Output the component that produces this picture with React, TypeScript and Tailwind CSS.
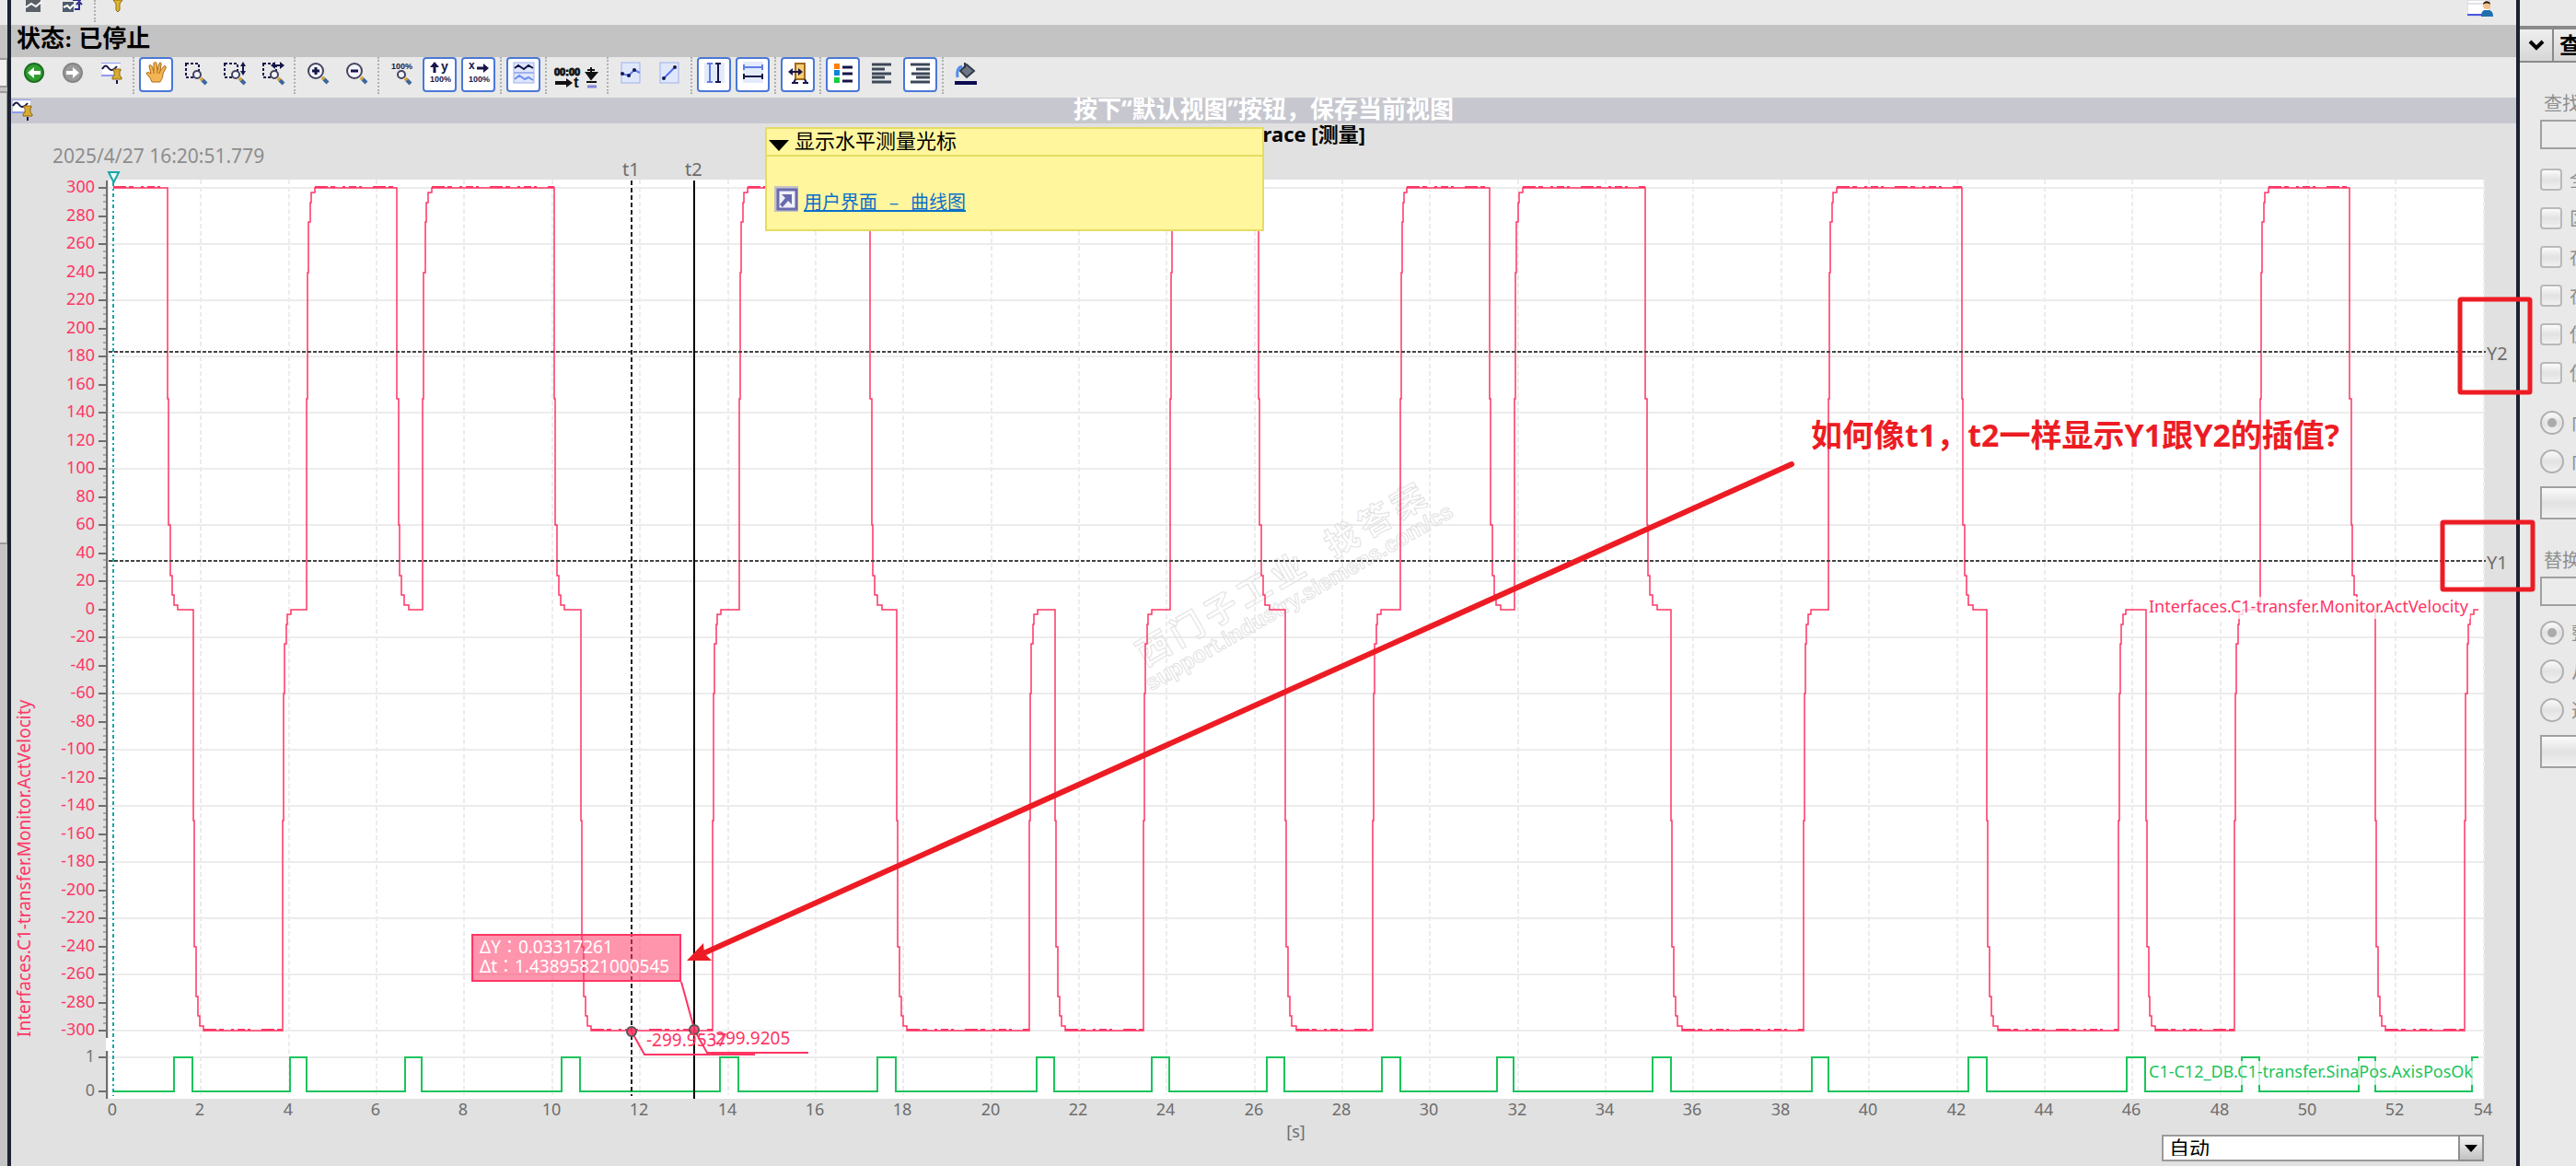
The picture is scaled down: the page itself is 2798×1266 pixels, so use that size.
import React from "react";

const UI = "font-['Noto_Sans','Noto_Sans_CJK_SC',sans-serif]";
const PINK = "#ff3564";
const GREEN = "#1cc45c";
const RED = "#ed1c24";

/* ---------- chart data ---------- */

const PLOT = { left: 118, right: 2698, top: 195, bottom: 1193 };
const yOf = (v: number) => Math.round(661.5 - v * 1.525);
const xOf = (s: number) => Math.round(123 + s * 47.68);

// [start of the change, settled, new level]
const velocity: [number, number, number][] = [
  [182, 193, 0], [210, 221, -300], [307, 316, 0], [333, 342, 300],
  [431, 444, 0], [459, 469, 300], [602, 613, 0], [631, 642, -300],
  [774, 783, 0], [803, 812, 300], [945, 958, 0], [974, 985, -300],
  [1118, 1127, 0], [1146, 1157, -300], [1242, 1251, 0], [1271, 1278, 300],
  [1367, 1379, 0], [1396, 1408, -300], [1491, 1500, 0], [1521, 1528, 300],
  [1618, 1630, 0], [1645, 1654, 300], [1787, 1800, 0], [1815, 1827, -300],
  [1959, 1967, 0], [1986, 1995, 300], [2131, 2143, 0], [2158, 2170, -300],
  [2301, 2309, 0], [2331, 2341, -300], [2427, 2436, 0], [2455, 2464, 300],
  [2552, 2565, 0], [2580, 2591, -300], [2677, 2687, 0],
];

const pulses: [number, number][] = [
  [189, 209], [315, 333], [440, 458], [610, 630], [782, 802], [953, 973],
  [1126, 1145], [1251, 1270], [1376, 1395], [1501, 1521], [1626, 1644],
  [1795, 1815], [1968, 1986], [2138, 2158], [2310, 2330], [2435, 2454],
  [2562, 2580], [2685, 2692],
];

function velocityPath() {
  let level = 300;
  let d = `M123 ${yOf(300)}`;
  for (const [a, b, next] of velocity) {
    const y0 = yOf(level);
    const dy = yOf(next) - y0;
    const w = b - a;
    const steps: [number, number][] = [[0, 0.5], [0.12, 0.8], [0.26, 0.92], [0.42, 0.965], [0.6, 0.99], [1, 1]];
    d += ` H${a}`;
    for (const [fx, fy] of steps) {
      d += ` H${Math.round(a + fx * w)} V${Math.round(y0 + dy * fy)}`;
    }
    level = next;
  }
  return d + " H2692";
}

function ripples() {
  const out: { x1: number; x2: number; y: number }[] = [];
  let level = 300;
  let from = 123;
  for (const [a, b, next] of velocity) {
    if (level !== 0) out.push({ x1: from, x2: a, y: yOf(level) - 1 });
    level = next;
    from = b;
  }
  return out;
}

function pulsePath() {
  let d = "M123 1185";
  pulses.forEach(([a, b], i) => {
    d += ` H${a} V1148 H${b}`;
    if (i < pulses.length - 1) d += " V1185";
  });
  return d;
}

const yTicks = Array.from({ length: 31 }, (_, i) => 300 - i * 20);
const yMinor = Array.from({ length: 121 }, (_, i) => 300 - i * 5);
const xTicks = Array.from({ length: 28 }, (_, i) => i * 2);

function Chart() {
  return (
    <svg
      viewBox="12 134 2721 1082"
      className={`block w-full h-auto ${UI}`}
      role="img"
      aria-label="Trace"
    >
      <rect x={PLOT.left} y={PLOT.top} width={PLOT.right - PLOT.left} height={PLOT.bottom - PLOT.top} fill="#fff" />
      <text x="1360" y="154" fontSize="22" fontWeight="700" fill="#000">Trace [测量]</text>
      <text x="57" y="177" fontSize="21" fill="#8d8d8d">2025/4/27 16:20:51.779</text>

      <g stroke="#ececec" strokeWidth="2">
        {yTicks.filter((_, i) => i % 2 === 0).map((v) => (
          <line key={v} x1={PLOT.left} x2={PLOT.right} y1={yOf(v)} y2={yOf(v)} />
        ))}
        <line x1={PLOT.left} x2={PLOT.right} y1="1148" y2="1148" />
        {xTicks.slice(1).map((s) => (
          <line key={s} x1={xOf(s)} x2={xOf(s)} y1={PLOT.top} y2={PLOT.bottom - 4} strokeDasharray="5 3" />
        ))}
      </g>

      <g stroke="#6e6e6e" strokeWidth="2">
        <line x1="116" x2="116" y1="196" y2="1127" />
        <line x1="116" x2="116" y1="1141" y2="1193" />
        <rect x="115" y="1127" width="3" height="14" fill="#fff" stroke="none" />
        {yTicks.map((v) => (
          <line key={v} x1="107" x2="116" y1={yOf(v)} y2={yOf(v)} />
        ))}
        {yMinor.map((v) => (
          <line key={v} x1="112" x2="116" y1={yOf(v)} y2={yOf(v)} strokeWidth="1" />
        ))}
        <line x1="107" x2="116" y1="1148" y2="1148" />
        <line x1="107" x2="116" y1="1185" y2="1185" />
      </g>
      <g fontSize="18" textAnchor="end" fill={PINK}>
        {yTicks.map((v) => (
          <text key={v} x="103" y={yOf(v) + 5}>{v}</text>
        ))}
        <g fill="#757575">
          <text x="103" y="1153">1</text>
          <text x="103" y="1190">0</text>
        </g>
      </g>
      <g fontSize="18" textAnchor="middle" fill="#6d6d6d">
        {xTicks.map((s) => (
          <text key={s} x={xOf(s) - 1} y="1211">{s}</text>
        ))}
      </g>
      <text transform="translate(33 1126) rotate(-90)" fontSize="19" fill={PINK}>
        Interfaces.C1-transfer.Monitor.ActVelocity
      </text>

      {/* watermark */}
      <g transform="translate(1244 724) rotate(-30)" fill="none" stroke="#e2e2e2" strokeWidth="1" fontWeight="700">
        <text x="0 42 84 126 168 236 278 319" y="0" fontSize="36">西门子工业找答案</text>
        <text x="-8" y="26" fontSize="24" className="font-['Liberation_Sans',sans-serif]">support.industry.siemens.com/cs</text>
      </g>

      <line x1="123" x2="123" y1="198" y2="1190" stroke="#1aa5a5" strokeWidth="2" strokeDasharray="4 3 2 3" />
      <path d="M118 187 H129 L123.500 198 Z" fill="#e8ffff" stroke="#1aa5a5" strokeWidth="2" />

      <path d={pulsePath()} fill="none" stroke={GREEN} strokeWidth="2" />
      <path d={velocityPath()} fill="none" stroke={PINK} strokeWidth="1.5" />
      <g stroke={PINK} strokeWidth="2">
        {ripples().map((r) => (
          <line key={r.x1} x1={r.x1} x2={r.x2} y1={r.y} y2={r.y} strokeDasharray="14 3 5 8 3 4 8 3 3 12" />
        ))}
      </g>

      {/* measuring cursors */}
      <g stroke="#222" strokeWidth="2">
        <line x1="118" x2="2700" y1="382" y2="382" strokeDasharray="4 2" stroke="#444" />
        <line x1="118" x2="2700" y1="609" y2="609" strokeDasharray="4 2" stroke="#444" />
        <line x1="686" x2="686" y1="196" y2="1190" strokeDasharray="5 3" />
        <line x1="754" x2="754" y1="196" y2="1193" stroke="#000" />
      </g>
      <g fontSize="20" fill="#6d6d6d">
        <text x="676" y="191">t1</text>
        <text x="744" y="191">t2</text>
        <text x="2701" y="391">Y2</text>
        <text x="2701" y="618">Y1</text>
      </g>

      {/* signal names */}
      <rect x="2334" y="648" width="349" height="24" fill="#fff" opacity="0.75" />
      <text x="2334" y="665" fontSize="18" fill={PINK}>Interfaces.C1-transfer.Monitor.ActVelocity</text>
      <rect x="2334" y="1152" width="352" height="26" fill="#fff" opacity="0.75" />
      <text x="2334" y="1170" fontSize="18" fill={GREEN}>C1-C12_DB.C1-transfer.SinaPos.AxisPosOk</text>

      {/* cursor values */}
      <g fill="none" stroke={PINK} strokeWidth="2">
        <path d="M740 1066 L754 1117" />
        <path d="M686 1120 L700 1145 H820" />
        <path d="M754 1118 L768 1143 H878" />
      </g>
      <g fill={PINK} fillOpacity="0.85" stroke="#555" strokeWidth="2">
        <circle cx="686" cy="1120" r="5" />
        <circle cx="754" cy="1118" r="5" />
      </g>
      <g fontSize="19" fill={PINK}>
        <text x="702" y="1136">-299.9537</text>
        <text x="771" y="1134">-299.9205</text>
      </g>
      <rect x="513" y="1015" width="226" height="50" fill="#ff3564" fillOpacity="0.53" stroke={PINK} strokeWidth="2" />
      <g fontSize="19" fill="#fff" className="font-['Noto_Sans','Noto_Sans_CJK_TC',sans-serif]">
        <text x="521" y="1035">ΔY：0.03317261</text>
        <text x="521" y="1056">Δt：1.43895821000545</text>
      </g>
    </svg>
  );
}

/* ---------- toolbar icons ---------- */

const NAVY = "#16164a";

function Icon({ children, w = 24 }: { children: React.ReactNode; w?: number }) {
  return (
    <svg width={w} height="26" viewBox={`0 0 ${w} 26`} fill="none" aria-hidden="true" className="shrink-0 overflow-visible">
      {children}
    </svg>
  );
}

function Lens({ x = 12, y = 12, r = 4 }: { x?: number; y?: number; r?: number }) {
  const k = Math.round(r * 0.7);
  return (
    <>
      <path d={`M${x + k + 1} ${y + k + 1} L${x + k + 3} ${y + k + 3}`} stroke="#d9a42c" strokeWidth="4" />
      <path d={`M${x + k + 3} ${y + k + 3} L${x + k + 7} ${y + k + 7}`} stroke="#3c679c" strokeWidth="4" />
      <circle cx={x} cy={y} r={r} fill="#f3f4fa" stroke="#44445f" strokeWidth="2" />
    </>
  );
}

const Arrow = ({ color, edge, flip }: { color: string; edge: string; flip?: boolean }) => (
  <Icon>
    <circle cx="12" cy="13" r="10" fill={color} stroke={edge} strokeWidth="2" />
    <path d={flip ? "M19 13 L12 7 V11 H5 V15 H12 V19 Z" : "M5 13 L12 7 V11 H19 V15 H12 V19 Z"} fill="#fff" />
  </Icon>
);

const PinIcon = () => (
  <Icon>
    <rect x="2" y="3" width="19" height="14" fill="#fff" />
    <path d="M1 2 H22 V3 H1Z M1 15 H15 V17 H1Z" fill="#8f9af0" />
    <path d="M2 9 C5 4 7 5 9 8 S14 11 18 6" stroke={NAVY} strokeWidth="2" />
    <path d="M14 9 H22 V11 H21 V16 L23 18 V20 H13 V18 L15 16 V11 H14 Z" fill="#d8ab35" stroke="#8f6b12" />
    <path d="M18 21 V25" stroke={NAVY} strokeWidth="2" />
  </Icon>
);

const HandIcon = () => (
  <Icon>
    <path
      d="M7 23 C6 20 4 17 1 14 C1 12 3 12 6 14 L4 6 C4 4 6 4 7 6 L9 11 L9 3 C9 1 12 1 12 3 L13 10 L15 3 C15 1 18 2 17 4 L16 11 L20 6 C21 5 23 6 22 8 L19 14 C19 19 17 21 16 23 Z"
      fill="#f3b553" stroke="#a86818" strokeWidth="1"
    />
    <path d="M9 11 V14 M13 10 V14 M16 11 L15 14" stroke="#a86818" />
  </Icon>
);

const ZoomArea = ({ dir }: { dir?: "v" | "h" }) => (
  <Icon w={24}>
    <path d="M2 3 H16 V18 H2 Z" stroke={NAVY} strokeWidth="2" strokeDasharray="3 2" />
    <Lens x={14} y={15} r={4} />
    {dir === "v" && (
      <>
        <path d="M22 5 V12" stroke={NAVY} strokeWidth="2" />
        <path d="M19 6 L22 1 L25 6 Z M19 11 L22 16 L25 11 Z" fill={NAVY} />
      </>
    )}
    {dir === "h" && (
      <>
        <path d="M14 5 H21" stroke={NAVY} strokeWidth="2" />
        <path d="M15 1 L10 5 L15 9 Z M20 1 L25 5 L20 9 Z" fill={NAVY} />
      </>
    )}
  </Icon>
);

const ZoomSign = ({ plus }: { plus?: boolean }) => (
  <Icon>
    <Lens x={10} y={11} r={8} />
    <path d={plus ? "M6 11 H14 M10 7 V15" : "M6 11 H14"} stroke={NAVY} strokeWidth="3" />
  </Icon>
);

const tiny = "font-['Liberation_Sans',sans-serif] font-bold";

const Zoom100 = () => (
  <Icon w={26}>
    <text x="2" y="9" fontSize="9" fill={NAVY} className={tiny}>100%</text>
    <Lens x={13} y={15} r={4} />
  </Icon>
);
const Fit = ({ axis }: { axis: "x" | "y" }) => (
  <Icon w={26}>
    {axis === "y" ? (
      <>
        <path d="M7 5 V13" stroke={NAVY} strokeWidth="3" />
        <path d="M2 7 L7 1 L12 7 Z" fill={NAVY} />
        <text x="14" y="11" fontSize="14" fill={NAVY} className={tiny}>y</text>
      </>
    ) : (
      <>
        <text x="2" y="9" fontSize="12" fill={NAVY} className={tiny}>x</text>
        <path d="M11 8 H19" stroke={NAVY} strokeWidth="3" />
        <path d="M18 3 L24 8 L18 13 Z" fill={NAVY} />
      </>
    )}
    <text x="2" y="23" fontSize="9" fill={NAVY} className={tiny}>100%</text>
  </Icon>
);

const WavesIcon = () => (
  <Icon>
    <rect x="1" y="2" width="22" height="22" fill="#dfe7fb" stroke="#9fb1ee" />
    <path d="M1 13 H23" stroke="#9fb1ee" strokeWidth="2" />
    <path d="M2 8 L6 5 L12 9 L17 5 L22 8" stroke={NAVY} strokeWidth="2" />
    <path d="M2 20 L7 16 L13 20 L17 18 L22 21" stroke="#6f8df0" strokeWidth="2" />
  </Icon>
);

const TimeIcon = () => (
  <Icon w={50}>
    <text x="0" y="12" fontSize="11" fill="#111" stroke="#111" className={tiny}>00:00</text>
    <path d="M1 20 H14" stroke="#111" strokeWidth="4" />
    <path d="M13 15 L20 20 L13 25 Z" fill="#111" />
    <text x="21" y="25" fontSize="17" fill="#111" className={tiny}>t</text>
    <path d="M40 3 V16 M36 6 H44 M35 9 H46 L40 16 Z M35 19 H46" stroke="#111" strokeWidth="2" fill="#111" />
    <path d="M36 24 H46" stroke="#7f86d8" strokeWidth="3" />
  </Icon>
);

const SamplesIcon = () => (
  <Icon>
    <rect x="2" y="2" width="20" height="22" fill="#dfe7fb" stroke="#9fb1ee" />
    <path d="M2 14 L10 16 L16 10 L22 13" stroke="#5f7df0" strokeWidth="2" />
    <g fill={NAVY}><circle cx="3" cy="14" r="2" /><circle cx="10" cy="16" r="2" /><circle cx="16" cy="10" r="2" /></g>
  </Icon>
);
const LineIcon = () => (
  <Icon>
    <rect x="2" y="2" width="20" height="22" fill="#dfe7fb" stroke="#9fb1ee" />
    <path d="M6 19 L18 7" stroke="#4f6df0" strokeWidth="2" />
    <g fill={NAVY}><circle cx="6" cy="19" r="2" /><circle cx="18" cy="7" r="2" /></g>
  </Icon>
);
const VCursors = () => (
  <Icon>
    <rect x="1" y="2" width="22" height="22" fill="#e3eafc" />
    <path d="M7 3 V23 M4 3 H10 M4 23 H10" stroke="#5f7de8" strokeWidth="2" />
    <path d="M16 3 V23 M13 3 H19 M13 23 H19" stroke={NAVY} strokeWidth="2" />
  </Icon>
);
const HCursors = () => (
  <Icon>
    <rect x="1" y="1" width="22" height="23" fill="#e3eafc" />
    <path d="M2 7 H22 M2 4 V10 M22 4 V10" stroke="#5f7de8" strokeWidth="2" />
    <path d="M2 17 H22 M2 14 V20 M22 14 V20" stroke={NAVY} strokeWidth="2" />
  </Icon>
);
const WindowIcon = () => (
  <Icon>
    <path d="M9 3 H19 V20 H9 Z" fill="#f6cd77" stroke="#a06a1c" strokeWidth="2" />
    <path d="M7 24 L9 20 M19 20 L21 24 M5 24 H12 M17 24 H23" stroke={NAVY} strokeWidth="2" />
    <path d="M4 12 H14" stroke={NAVY} strokeWidth="2" />
    <path d="M6 8 L1 12 L6 16 Z M12 8 L17 12 L12 16 Z" fill={NAVY} />
  </Icon>
);
const LegendIcon = () => (
  <Icon>
    <rect x="2" y="3" width="6" height="6" fill="#ff7d0a" />
    <rect x="2" y="10" width="6" height="6" fill="#0a84dc" />
    <rect x="2" y="18" width="6" height="6" fill="#14d03c" />
    <path d="M11 7 H22 M11 14 H22 M11 22 H22" stroke={NAVY} strokeWidth="3" />
  </Icon>
);
const AlignIcon = ({ right }: { right?: boolean }) => (
  <Icon>
    <path
      d={right ? "M1 4 H22 M7 9 H22 M2 14 H22 M7 18 H22 M1 23 H22" : "M1 4 H22 M1 9 H15 M1 14 H22 M1 18 H15 M1 23 H22"}
      stroke="#3c4858" strokeWidth="3"
    />
  </Icon>
);
const BucketIcon = () => (
  <Icon>
    <path d="M11 2 V8 M6 11 L13 4 L21 11 L13 18 Z" fill="#6d7685" stroke="#333b4b" strokeWidth="2" />
    <path d="M3 18 C2 11 4 7 8 6" stroke="#4f8cf0" strokeWidth="3" />
    <path d="M0 24 H24" stroke="#0b0b50" strokeWidth="4" />
  </Icon>
);

type Tool = { label: string; icon: React.ReactNode; on?: boolean; wide?: boolean } | null;

const tools: Tool[] = [
  { label: "后退", icon: <Arrow color="#2f9e2f" edge="#1d6d22" /> },
  { label: "前进", icon: <Arrow color="#9b9b9b" edge="#858585" flip /> },
  { label: "默认视图", icon: <PinIcon /> },
  null,
  { label: "移动视图", icon: <HandIcon />, on: true },
  { label: "缩放选择", icon: <ZoomArea /> },
  { label: "垂直缩放选择", icon: <ZoomArea dir="v" /> },
  { label: "水平缩放选择", icon: <ZoomArea dir="h" /> },
  null,
  { label: "放大", icon: <ZoomSign plus /> },
  { label: "缩小", icon: <ZoomSign /> },
  null,
  { label: "显示全部", icon: <Zoom100 /> },
  { label: "缩放 Y 轴", icon: <Fit axis="y" />, on: true },
  { label: "缩放 X 轴", icon: <Fit axis="x" />, on: true },
  null,
  { label: "曲线排列", icon: <WavesIcon />, on: true },
  null,
  { label: "时间单位", icon: <TimeIcon />, wide: true },
  null,
  { label: "显示采样点", icon: <SamplesIcon /> },
  { label: "插值", icon: <LineIcon /> },
  null,
  { label: "显示垂直测量光标", icon: <VCursors />, on: true },
  { label: "显示水平测量光标", icon: <HCursors />, on: true },
  null,
  { label: "显示测量窗口", icon: <WindowIcon />, on: true },
  null,
  { label: "显示图例", icon: <LegendIcon />, on: true },
  { label: "图例左对齐", icon: <AlignIcon /> },
  { label: "图例右对齐", icon: <AlignIcon right />, on: true },
  null,
  { label: "背景颜色", icon: <BucketIcon /> },
];

function Toolbar() {
  return (
    <div className="flex h-11 items-start gap-[5px] bg-[#e9e9e9] pl-1.5">
      {tools.map((t, i) =>
        t === null ? (
          <span key={i} className="h-10 w-0.5 border-l-2 border-dotted border-[#b0b0b0]" />
        ) : (
          <button
            key={i}
            type="button"
            aria-label={t.label}
            aria-pressed={!!t.on}
            className={
              t.on
                ? "flex h-[38px] w-[37px] shrink-0 items-start justify-center rounded-sm border-2 border-[#4a78d8] bg-white pt-0.5"
                : t.wide
                  ? "flex h-[38px] w-[55px] shrink-0 items-start justify-center pt-2"
                  : "flex h-[38px] w-[37px] shrink-0 items-start justify-center pt-1"
            }
          >
            {t.icon}
          </button>
        ),
      )}
    </div>
  );
}

function TopBar() {
  return (
    <div className="flex h-[27px] items-start gap-[5px] bg-[#e9e9e9] pl-1.5 pr-6">
      <button type="button" aria-label="导出测量" className="flex w-[37px] justify-center">
        <svg width="22" height="13" fill="none" aria-hidden="true">
          <path d="M2 0 H18 V13 H2Z" fill="#5b6066" />
          <path d="M2 8 L8 4 L13 7 L19 2" stroke="#fff" strokeWidth="2" />
        </svg>
      </button>
      <button type="button" aria-label="导入测量" className="flex w-[37px] justify-center">
        <svg width="22" height="13" fill="none" aria-hidden="true">
          <path d="M0 2 H12 V13 H0Z" fill="#4c5b6d" />
          <path d="M1 8 L5 6 L8 9 L12 5" stroke="#fff" strokeWidth="2" />
          <path d="M13 10 H18 V4 M15 5 L18 2 L21 5" stroke="#2c2c8c" strokeWidth="2" />
          <path d="M11 0 H20 V1 H11Z" fill="#2c2c8c" />
        </svg>
      </button>
      <span className="h-6 w-0.5 border-l-2 border-dotted border-[#b0b0b0]" />
      <button type="button" aria-label="触发" className="flex w-[37px] justify-center">
        <svg width="14" height="13" aria-hidden="true">
          <path d="M2 0 H12 L9 4 V11 L7 13 L5 11 V4 Z" fill="#e0b62c" stroke="#8f6b12" />
        </svg>
      </button>
      <button type="button" aria-label="用户" className="ml-auto">
        <svg width="29" height="19" aria-hidden="true">
          <path d="M0 0 H24 V17 H0Z" fill="#fff" stroke="#c4c4d0" />
          <path d="M0 4 H20" stroke="#c4c4d0" />
          <path d="M0 16 H16" stroke="#4a58e0" strokeWidth="2" />
          <circle cx="21" cy="6" r="4" fill="#f3c28c" />
          <path d="M17 5 C17 0 25 0 25 5 C23 3 19 3 17 5Z" fill="#2d1a10" />
          <path d="M15 18 C15 11 18 11 21 11 S28 11 28 18 Z" fill="#1f6fae" />
        </svg>
      </button>
    </div>
  );
}

function Tip() {
  return (
    <div className="absolute left-[831px] top-[138px] h-[113px] w-[542px] border-2 border-[#e6dc62] bg-[#fff69d] font-['Noto_Sans_CJK_SC',sans-serif] text-black">
      <div className="flex h-[30px] items-start border-b-2 border-[#e6dc62] pl-0.5">
        <svg width="22" height="12" aria-hidden="true" className="mt-3"><path d="M0 0 H22 L11 12 Z" /></svg>
        <span className="ml-1.5 text-[22px] leading-[22px]">显示水平测量光标</span>
      </div>
      <div className="flex items-start pl-2 pt-8">
        <svg width="26" height="28" viewBox="0 0 26 28" fill="none" aria-hidden="true">
          <path d="M0 0 H26 V28 H0Z" fill="#c3c3c8" />
          <path d="M4 4 H24 V25 H4Z" fill="#f0f0fa" stroke="#6a6aae" strokeWidth="3" />
          <path d="M8 9 H19 V20 L15 16 L9 23 L6 20 L12 13 Z" fill="#6a6aae" />
        </svg>
        <a href="#trace" className="ml-1.5 mt-1.5 font-['Liberation_Mono','Noto_Sans_CJK_SC',monospace] text-[20px] leading-7 text-[#0b6fcb] underline">
          用户界面 – 曲线图
        </a>
      </div>
    </div>
  );
}

/* ---------- search pane ---------- */

const glossy = "bg-linear-to-b from-[#fafafa] via-[#e2e2e2] to-[#f0f0f0]";

function Check({ label, name }: { label: string; name: string }) {
  return (
    <label className="flex h-[42px] items-center gap-2">
      <input type="checkbox" name={name} className={`size-6 shrink-0 appearance-none rounded-sm border-2 border-[#b9b9b9] ${glossy}`} />
      <span>{label}</span>
    </label>
  );
}

function Radio({ label, name, on }: { label: string; name: string; on?: boolean }) {
  return (
    <label className="flex h-[42px] items-center gap-2">
      <input
        type="radio"
        name={name}
        defaultChecked={on}
        className={`grid size-[26px] shrink-0 appearance-none place-items-center rounded-full border-2 border-[#b0b0b0] before:size-2.5 before:rounded-full before:content-[''] checked:before:bg-[#ababab] ${glossy}`}
      />
      <span>{label}</span>
    </label>
  );
}

function SearchPane() {
  return (
    <aside className="w-[61px] shrink-0 overflow-hidden bg-[#e9e9e9] font-['Noto_Sans_CJK_SC',sans-serif] text-[20px] leading-6 text-[#8f8f8f]">
      <div className="mt-7 flex h-10 border-b-2 border-t-4 border-[#8a8a8a] bg-linear-to-b from-[#efefef] to-[#d6d6d6]">
        <button type="button" aria-label="折叠" className="flex w-[37px] shrink-0 items-center justify-center border-r-2 border-[#8a8a8a]">
          <svg width="18" height="12" fill="none" aria-hidden="true"><path d="M2 2 L9 9 L16 2" stroke="#000" strokeWidth="4" /></svg>
        </button>
        <h2 className="pl-1.5 text-[24px] font-bold leading-8 text-black">查</h2>
      </div>
      <div className="w-24 pl-[22px]">
        <label htmlFor="find" className="mt-8 block whitespace-nowrap pl-1">查找</label>
        <input id="find" className="mt-1.5 block h-8 w-full border-2 border-[#a0a0a0] bg-[#ebebeb]" />
        <div className="mt-3">
          {["全", "区", "在", "在", "使", "使"].map((l, i) => (
            <Check key={i} label={l} name={`option-${i}`} />
          ))}
        </div>
        <div className="mt-3">
          <Radio name="direction" label="向" on />
          <Radio name="direction" label="向" />
        </div>
        <button type="button" aria-label="查找下一个" className={`mt-1.5 block h-9 w-full border-2 border-[#a0a0a0] ${glossy}`} />
        <label htmlFor="replace" className="mt-8 block whitespace-nowrap pl-1">替换</label>
        <input id="replace" className="mt-1.5 block h-8 w-full border-2 border-[#a0a0a0] bg-[#ebebeb]" />
        <div className="mt-2">
          <Radio name="scope" label="整" on />
          <Radio name="scope" label="从" />
          <Radio name="scope" label="选" />
        </div>
        <button type="button" aria-label="替换全部" className={`mt-1.5 block h-9 w-full border-2 border-[#a0a0a0] ${glossy}`} />
      </div>
    </aside>
  );
}

function Annotations() {
  return (
    <svg viewBox="0 0 2798 1266" className="pointer-events-none absolute left-0 top-0 w-full" fill="none" aria-hidden="true">
      <rect x="2672" y="325" width="76" height="101" rx="1" stroke={RED} strokeWidth="5" />
      <rect x="2653" y="567" width="98" height="73" rx="1" stroke={RED} strokeWidth="5" />
      <path d="M1946 504 L762 1036" stroke={RED} strokeWidth="6" strokeLinecap="round" />
      <path d="M746 1043 L764 1024 L765 1035 L773 1043 Z" fill={RED} />
      <text x="1967" y="485" fontSize="34" fill={RED} className="font-['Noto_Sans','Noto_Sans_CJK_SC',sans-serif] font-bold">
        如何像t1，t2一样显示Y1跟Y2的插值?
      </text>
    </svg>
  );
}

export default function App() {
  return (
    <div className={`relative flex min-h-screen overflow-hidden bg-[#e1e1e1] ${UI}`}>
      <div className="flex w-2 shrink-0 flex-col bg-[#c4c4c4]">
        <div className="h-[27px] bg-[#e9e9e9]" />
        <div className="mt-9 h-8 border-y-2 border-r border-[#9a9a9a] bg-[#efefef]" />
        <div className="mt-1 h-[492px] border-b-2 border-r border-t-2 border-[#9a9a9a] bg-[#dcdcdc]" />
      </div>
      <div className="w-1 shrink-0 bg-[#1b2133]" />

      <main className="min-w-0 flex-1">
        <TopBar />
        <div className="flex h-[35px] items-start bg-[#c3c3c3] pl-1.5 font-['Liberation_Serif','Noto_Sans_CJK_SC',serif] text-[26px] font-bold leading-8 text-black">
          状态: 已停止
        </div>
        <Toolbar />
        <div className={`relative flex h-7 items-start justify-center bg-[#c7c8cf] text-[26px] font-bold leading-6 text-white ${UI}`}>
          <span className="absolute left-0 top-0"><PinIcon /></span>
          按下“默认视图”按钮，保存当前视图
        </div>
        <Chart />
        <div className="grid h-[50px] grid-cols-[1fr_auto_1fr] items-start pl-[105px] pr-[35px]">
          <span />
          <span className="pt-0.5 text-[18px] leading-5 text-[#6d6d6d]">[s]</span>
          <div className="relative mt-4 w-[350px] justify-self-end">
            <select
              aria-label="时间轴"
              className="block h-[29px] w-full appearance-none border-2 border-[#9a9a9a] bg-white pb-1 pl-1.5 font-['Noto_Sans_CJK_SC',sans-serif] text-[22px] leading-5 text-black"
            >
              <option>自动</option>
            </select>
            <span className="pointer-events-none absolute inset-y-0 right-0 flex w-7 items-center justify-center border-2 border-[#8f8f8f] bg-linear-to-b from-[#f4f4f4] to-[#c2c2c2]">
              <svg width="14" height="8" aria-hidden="true"><path d="M0 0 H14 L7 8 Z" /></svg>
            </span>
          </div>
        </div>
      </main>

      <div className="w-1 shrink-0 bg-[#1b2133]" />
      <SearchPane />
      <Tip />
      <Annotations />
    </div>
  );
}
